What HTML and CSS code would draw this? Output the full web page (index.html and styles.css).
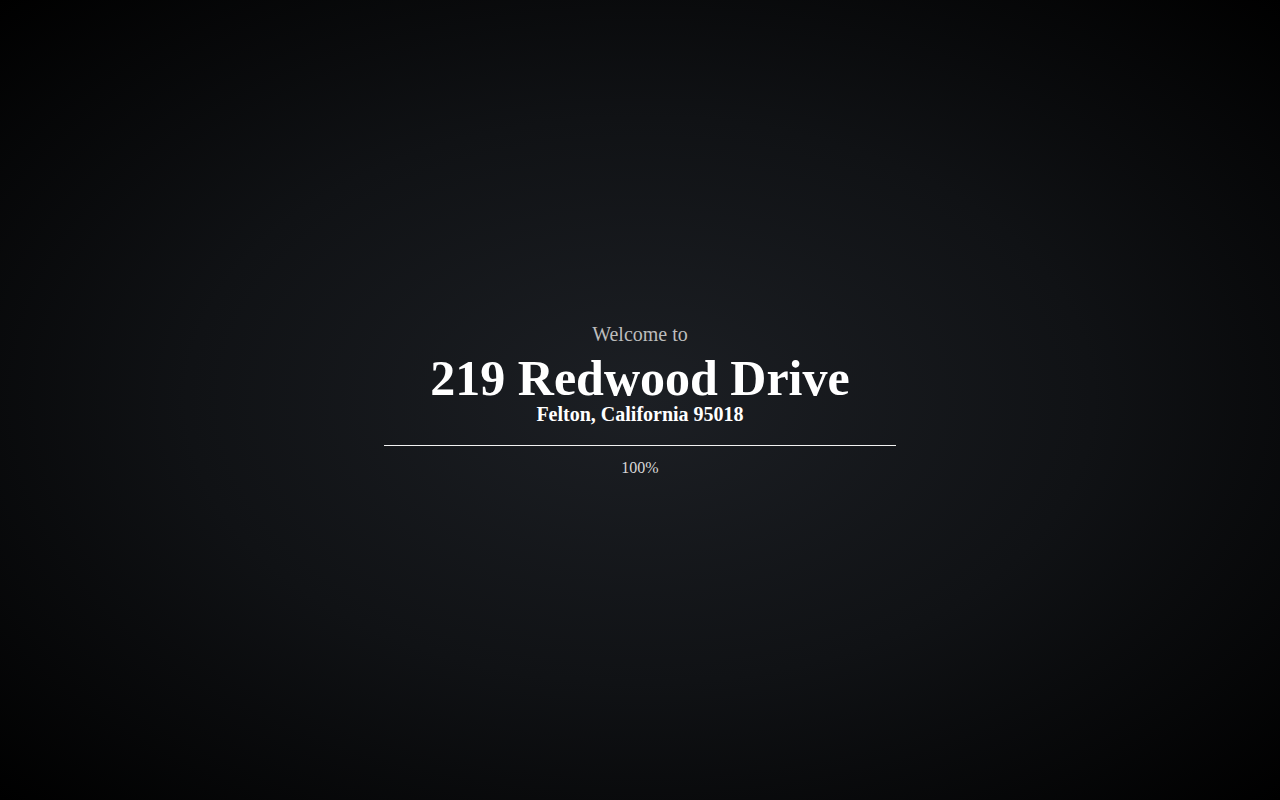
FILE: index.html
```html
<!DOCTYPE html>
<html>
<head>
<meta charset="utf-8">
<link rel="stylesheet" href="styles.css">
</head>
<body>
<main class="screen">
  <div class="intro">
    <div class="welcome">Welcome to</div>
    <h1 class="title">219 Redwood Drive</h1>
    <div class="subtitle">Felton, California 95018</div>
    <div class="progress"><div class="bar" style="width:100%"></div></div>
    <div class="percent">100%</div>
  </div>
</main>
</body>
</html>
```
FILE: styles.css
```css
html, body {
  margin: 0;
  padding: 0;
  height: 100%;
}
body {
  font-family: "Liberation Serif", "Times New Roman", serif;
  background: #000;
}
.screen {
  width: 100%;
  height: 100vh;
  display: flex;
  align-items: center;
  justify-content: center;
  background: radial-gradient(ellipse at center, #1c1f24 0%, #101215 50%, #000000 100%);
}
.intro {
  display: flex;
  flex-direction: column;
  align-items: center;
  width: 512px;
}
.welcome {
  font-size: 20px;
  color: #bdbdbd;
  line-height: 22px;
}
.title {
  margin: 8px 0 0;
  font-size: 50px;
  font-weight: bold;
  color: #fff;
  line-height: 50px;
}
.subtitle {
  margin-top: 1px;
  font-size: 20px;
  font-weight: bold;
  color: #fff;
  line-height: 20px;
}
.progress {
  width: 100%;
  height: 1px;
  margin-top: 21px;
  background: rgba(255,255,255,0.1);
}
.bar {
  height: 1px;
  background: #f2f2f2;
}
.percent {
  margin-top: 13px;
  font-size: 16px;
  color: #d8d8d8;
  line-height: 18px;
}
```
